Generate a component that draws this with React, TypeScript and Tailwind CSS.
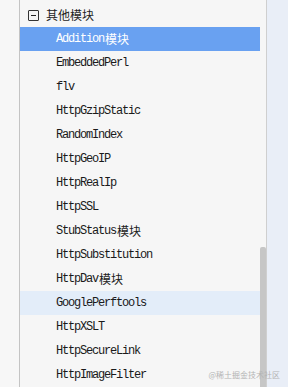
import React from 'react';

type Item = { latin: string; cjk?: string };

const items: Item[] = [
  { latin: 'Addition', cjk: '模块' },
  { latin: 'EmbeddedPerl' },
  { latin: 'flv' },
  { latin: 'HttpGzipStatic' },
  { latin: 'RandomIndex' },
  { latin: 'HttpGeoIP' },
  { latin: 'HttpRealIp' },
  { latin: 'HttpSSL' },
  { latin: 'StubStatus', cjk: '模块' },
  { latin: 'HttpSubstitution' },
  { latin: 'HttpDav', cjk: '模块' },
  { latin: 'GooglePerftools' },
  { latin: 'HttpXSLT' },
  { latin: 'HttpSecureLink' },
  { latin: 'HttpImageFilter' },
];

const cjkFont = "font-['Noto_Sans_CJK_SC',sans-serif]";

export default function App() {
  return (
    <div className="relative flex h-[387px] w-[288px] overflow-hidden bg-[#f6f6f6]">
      {/* left gutter */}
      <div className="w-[20px] shrink-0 border-r border-[#c4c4c4] bg-[#f7f7f7]" />

      {/* tree list */}
      <div className="w-[240px] shrink-0 pt-[3px]">
        <div className="flex h-[24px] items-center pl-[8px]">
          <span className="flex h-[11px] w-[11px] items-center justify-center rounded-[1px] border border-[#333]">
            <span className="h-px w-[5px] bg-[#222]" />
          </span>
          <span className={`ml-[7px] text-[12px] leading-none text-[#1e1e1e] ${cjkFont}`}>其他模块</span>
        </div>

        {items.map((item, i) => {
          const selected = i === 0;
          const hover = item.latin === 'GooglePerftools';
          return (
            <div
              key={item.latin}
              className={`flex h-[24px] items-center pl-[36px] ${
                selected ? 'bg-[#69a1f1] text-white' : hover ? 'bg-[#e3edf9] text-[#1a1a1a]' : 'text-[#1a1a1a]'
              }`}
            >
              <span className="font-['Liberation_Mono',monospace] text-[12px] leading-none tracking-[-1.2px]">
                {item.latin}
              </span>
              {item.cjk && (
                <span className={`ml-[1px] text-[12px] leading-none ${cjkFont}`}>{item.cjk}</span>
              )}
            </div>
          );
        })}
      </div>

      {/* scrollbar */}
      <div className="flex w-[6px] shrink-0 flex-col justify-end">
        <div className="h-[140px] rounded-t-[2px] bg-[#c6c6c6]" />
      </div>
      <div className="w-px shrink-0 bg-[#cfcfcf]" />

      {/* right panel */}
      <div className="flex-1 bg-[#e9eef7]" />

      <span className={`absolute bottom-[8px] right-[8px] text-[8px] leading-none text-[#b4b4b4] ${cjkFont}`}>
        @稀土掘金技术社区
      </span>
    </div>
  );
}
